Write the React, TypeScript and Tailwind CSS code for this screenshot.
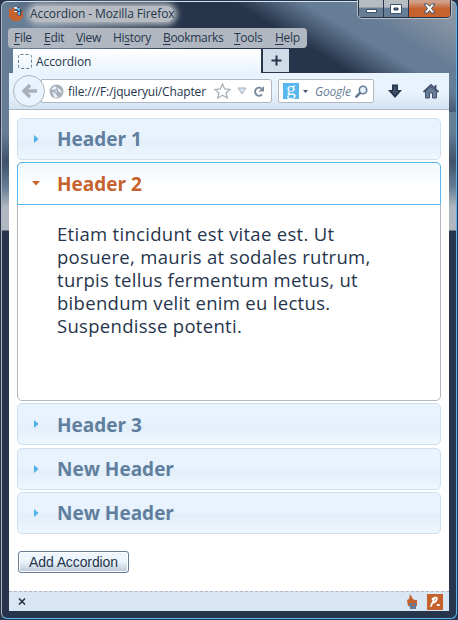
import React from "react";

const menus = [
  { name: "File", key: 0, cls: "w-[30px]" },
  { name: "Edit", key: 0, cls: "w-[32px]" },
  { name: "View", key: 0, cls: "w-[37px]" },
  { name: "History", key: 2, cls: "w-[50px]" },
  { name: "Bookmarks", key: 0, cls: "w-[71px]" },
  { name: "Tools", key: 0, cls: "w-[41px]" },
  { name: "Help", key: 0, cls: "w-[30px]" },
];

function TitleBar() {
  return (
    <div className="flex h-[28px] justify-between">
      <div className="flex h-[27px] items-center">
        <svg width="16" height="16" viewBox="0 0 16 16" className="relative z-10 -ml-px shrink-0">
          <path d="M1 1 3 4 6 1h5l4 4v6l-4 4H5l-4-4z" fill="#c5622d" />
          <path d="M6 1h5l3 3-1 6-4-1 1-3-4-1 2-2z" fill="#40516b" />
          <path d="M9 2h3v3l-3-1zM10 6h2v3h-2z" fill="#57b7ee" />
          <path d="M6 1h3v2H7zM6 5h3v1H6z" fill="#e9f3fd" />
        </svg>
        <span className="ml-[6px] rounded-full bg-[#b6bcc2] text-[12px] leading-[16px] tracking-[-0.1px] whitespace-nowrap text-[#26354b] shadow-[0_0_6px_3px_#b6bcc2]">Accordion - Mozilla Firefox</span>
      </div>
      <div className="-mr-[2px] flex h-[18px] w-[93px] rounded-b-[4px] border border-t-0 border-[#26354b] outline outline-[#b6bcc2]">
        <div className="flex w-[25px] items-center justify-center border-r border-[#26354b] bg-linear-to-b from-[#b6bcc2] from-40% to-[#667d96] to-50%">
          <svg width="13" height="7" viewBox="0 0 13 7" className="mt-[5px]"><path d="M1.500 1.500h10v3h-10z" fill="#fff" stroke="#40516b" /></svg>
        </div>
        <div className="flex w-[25px] items-center justify-center border-r border-[#26354b] bg-linear-to-b from-[#b6bcc2] from-40% to-[#667d96] to-50%">
          <svg width="12" height="10" viewBox="0 0 12 10"><path d="M.5.5h11v9H.5z" fill="#fff" stroke="#40516b" /><path d="M4 4h4v2H4z" fill="#667d96" stroke="#26354b" /></svg>
        </div>
        <div className="flex flex-1 items-center justify-center rounded-br-[3px] bg-linear-to-b from-[#cfa18b] from-10% to-[#c5622d] to-50%">
          <svg width="13" height="11" viewBox="0 0 13 11"><path d="M1 1h3.500l2 2.300L8.500 1H12L8.500 5.500 12 10H8.500l-2-2.500-2 2.500H1l3.500-4.500z" fill="#fff" stroke="#40516b" /></svg>
        </div>
      </div>
    </div>
  );
}

function MenuBar() {
  return (
    <div className="-ml-px flex h-[20px] w-[299px] items-center rounded-[4px] bg-[#b0b7c0] pl-[6px] text-[12px] tracking-[-0.3px] text-[#26354b]">
      {menus.map((m) => (
        <span key={m.name} className={"shrink-0 whitespace-nowrap " + m.cls}>
          {m.name.slice(0, m.key)}
          <span className="underline underline-offset-2">{m.name[m.key]}</span>
          {m.name.slice(m.key + 1)}
        </span>
      ))}
    </div>
  );
}

function Tabs() {
  return (
    <div className="mt-px flex h-[24px] pl-[4px]">
      <div className="flex w-[248px] items-center bg-linear-to-b from-white to-[#e9f3fd] pl-[5px]">
        <svg width="15" height="15" viewBox="0 0 15 15"><rect x=".5" y=".5" width="13" height="14" rx="2" fill="none" stroke="#667d96" strokeDasharray="3 2" /></svg>
        <span className="ml-[3px] pt-px text-[12px] tracking-[-0.1px] text-[#26354b]">Accordion</span>
      </div>
      <div className="ml-[2px] flex h-[23px] w-[26px] items-center justify-center bg-[#d0dce8]">
        <svg width="11" height="11" viewBox="0 0 11 11"><path d="M5.500.5v10M.5 5.500h10" stroke="#26354b" strokeWidth="2" /></svg>
      </div>
    </div>
  );
}

function Toolbar() {
  return (
    <div className="flex h-[37px] items-center border-b border-[#b0b7c0] bg-linear-to-b from-[#e9f3fd] from-50% to-[#d4e4f2]">
      <div className="z-10 ml-[4px] flex h-[32px] w-[32px] shrink-0 items-center justify-center rounded-full border border-[#b0b7c0] bg-[#e9f3fd]">
        <svg width="16" height="16" viewBox="0 0 16 16"><path d="M9 2 3 8l6 6M3 8h13" fill="none" stroke="#a9b0b9" strokeWidth="3.500" /></svg>
      </div>
      <div className="-ml-[4px] flex h-[24px] w-[231px] shrink-0 items-center rounded-r-[3px] border border-[#b0b7c0] bg-white pl-[7px]">
        <svg width="15" height="15" viewBox="0 0 15 15">
          <circle cx="7.500" cy="7.500" r="7" fill="#a9b0b9" />
          <path d="m2 5 4-3 2 2-3 2zM8 4l3 1 2 4-3-1zM3 8l3 1 3 4-3 1zM6 6l2 1-1 2z" fill="#e9f3fd" />
        </svg>
        <span className="ml-[4px] w-[146px] shrink-0 pt-px text-[12px] tracking-[-0.15px] whitespace-nowrap text-[#26354b]">file:///F:/jqueryui/Chapter</span>
        <svg width="17" height="16" viewBox="0 0 17 16"><path d="m8.500 1 2.200 5 5.300.5-4 3.500 1.300 5-4.800-2.700L3.700 15 5 10 1 6.500 6.300 6z" fill="#fff" stroke="#a9b0b9" strokeWidth="1.300" /></svg>
        <svg width="10" height="8" viewBox="0 0 10 8" className="ml-[6px]"><path d="M1 1h8L5 7z" fill="#d4e4f2" stroke="#a9b0b9" /></svg>
        <svg width="13" height="13" viewBox="0 0 13 13" className="ml-[5px]"><path d="M9.500 3.500A4 4 0 1 0 10 9.500" fill="none" stroke="#7d8b9c" strokeWidth="2" /><path d="M12 1v5.500H6.500z" fill="#7d8b9c" /></svg>
      </div>
      <div className="ml-[6px] flex h-[24px] w-[96px] shrink-0 items-center rounded-[2px] border border-[#b0b7c0] bg-white pl-[4px]">
        <div className="flex h-[16px] w-[16px] items-center justify-center bg-[#57b7ee] font-['Liberation_Serif',serif] text-[19px] leading-none text-white"><span className="-mt-[6px]">g</span></div>
        <svg width="5" height="3" viewBox="0 0 5 3" className="ml-[4px]"><path d="M0 0h5L2.500 3z" fill="#40516b" /></svg>
        <span className="ml-[7px] w-[40px] pt-px text-[12px] tracking-[-0.2px] text-[#667d96] italic">Google</span>
        <svg width="13" height="13" viewBox="0 0 13 13"><circle cx="8" cy="5" r="3.700" fill="#e9f3fd" stroke="#667d96" strokeWidth="1.600" /><path d="M5.500 7.500.5 12.500" stroke="#667d96" strokeWidth="2.500" /></svg>
      </div>
      <svg width="16" height="15" viewBox="0 0 16 15" className="ml-[13px] shrink-0"><path d="M5 .5h6v5.500H15l-7 8-7-8h4z" fill="#26354b" /><path d="M6.500 2h3v5h2L8 11 4.500 7h2z" fill="#40516b" /></svg>
      <svg width="16" height="15" viewBox="0 0 16 15" className="ml-[20px] shrink-0"><path d="M2.500 7.500 8 3l5.500 4.500V14H9.500V9h-3v5h-4z" fill="#667d96" stroke="#40516b" /><path d="M.5 8 8 1l7.500 7M12.500 1v4" fill="none" stroke="#40516b" strokeWidth="1.800" /></svg>
    </div>
  );
}

function Header({ title }: { title: string }) {
  return (
    <div className="mb-[2.400px] flex h-[42px] items-center rounded-[5px] border border-[#cfe1f0] bg-linear-to-b from-[#e9f3fd] from-45% via-[#e2eef9] via-55% to-[#eff7fe] pl-[16px] text-[#607f9e]">
      <svg width="5" height="8" viewBox="0 0 5 8"><path d="M0 0v8l4.500-4z" fill="#4bb0e8" /></svg>
      <h3 className="ml-[18px] pt-px text-[19px] font-bold">{title}</h3>
    </div>
  );
}

export default function App() {
  return (
    <div className="flex h-[620px] w-[458px] flex-col overflow-hidden bg-[#26354b] p-px font-['Open_Sans','Noto_Sans',sans-serif]">
      <div className="flex h-[618px] w-[456px] flex-col rounded-[6px] border border-[#57b7ee] border-t-[#d4e4f2] border-l-[#b0b7c0] bg-[linear-gradient(31deg,#667d96_0%,#667d96_28%,#26354b_46%,#26354b_65%,#667d96_76%,#667d96_82%,#8895a5_94%),linear-gradient(#667d96_0,#667d96_130px,#40516b_160px,#667d96_185px,#b0b7c0_205px,#b0b7c0_228px,#26354b_229px)] bg-[size:100%_110px,100%_100%] bg-no-repeat px-[7px]">
        <div className="-mt-[2px]"><TitleBar /></div>
        <MenuBar />
        <Tabs />
        <main className="flex h-[538px] w-[440px] shrink-0 flex-col bg-white">
          <Toolbar />
          <div className="h-[481px] px-[8px] pt-[8px]">
            <Header title="Header 1" />
            <section className="mb-[2px] h-[239px] rounded-[5px] border border-[#b0b7c0] bg-white">
              <div className="-m-px flex h-[43px] items-center rounded-t-[5px] border border-[#57b7ee] bg-linear-to-b from-[#f0f7fd] to-white to-60% pl-[14px] text-[#c5622d]">
                <svg width="8" height="5" viewBox="0 0 8 5"><path d="M0 0h8L4 4.500z" fill="currentColor" /></svg>
                <h3 className="ml-[17px] text-[19px] font-bold">Header 2</h3>
              </div>
              <p className="mt-[19px] pl-[39px] text-[18.500px] leading-[22.800px] tracking-[0.3px] whitespace-nowrap text-[#26354b]">
                Etiam tincidunt est vitae est. Ut<br />posuere, mauris at sodales rutrum,<br />turpis tellus fermentum metus, ut<br />bibendum velit enim eu lectus.<br />Suspendisse potenti.
              </p>
            </section>
            <Header title="Header 3" />
            <Header title="New Header" />
            <Header title="New Header" />
            <button className="mt-[17px] ml-px flex h-[22px] w-[111px] items-center justify-center rounded-[3px] border border-[#667d96] bg-linear-to-b from-[#eef6fd] from-45% to-[#b9c8d6] font-['Liberation_Sans',Arial,sans-serif] text-[14px] tracking-[-0.1px] whitespace-nowrap text-[#26354b] inset-ring inset-ring-white">Add Accordion</button>
          </div>
          <footer className="flex h-[20px] items-center border-t border-dashed border-[#b0b7c0] bg-[#d9e7f4] pl-[9px]">
            <svg width="8" height="7" viewBox="0 0 8 7"><path d="m1 .5 6 6m0-6-6 6" stroke="#26354b" strokeWidth="1.600" /></svg>
            <svg width="11" height="16" viewBox="0 0 11 16" className="ml-[381px]"><path d="M3 0 6 5l2 1h2v6H1L0 6l2-1z" fill="#c5622d" /><path d="M2 9h7v6H3z" fill="#667d96" /><path d="M5 10h2v2H5z" fill="#c5622d" /></svg>
            <svg width="16" height="16" viewBox="0 0 16 16" className="ml-[9px]"><path d="M0 0h16v16H0z" fill="#c5622d" /><path d="m4 12 3.500-8M5.500 5C8 2.500 11 3.500 9.500 6S7.500 8 7 8.500M10.500 11H12" fill="none" stroke="#fff" strokeWidth="1.800" strokeLinecap="round" /></svg>
          </footer>
        </main>
      </div>
    </div>
  );
}
